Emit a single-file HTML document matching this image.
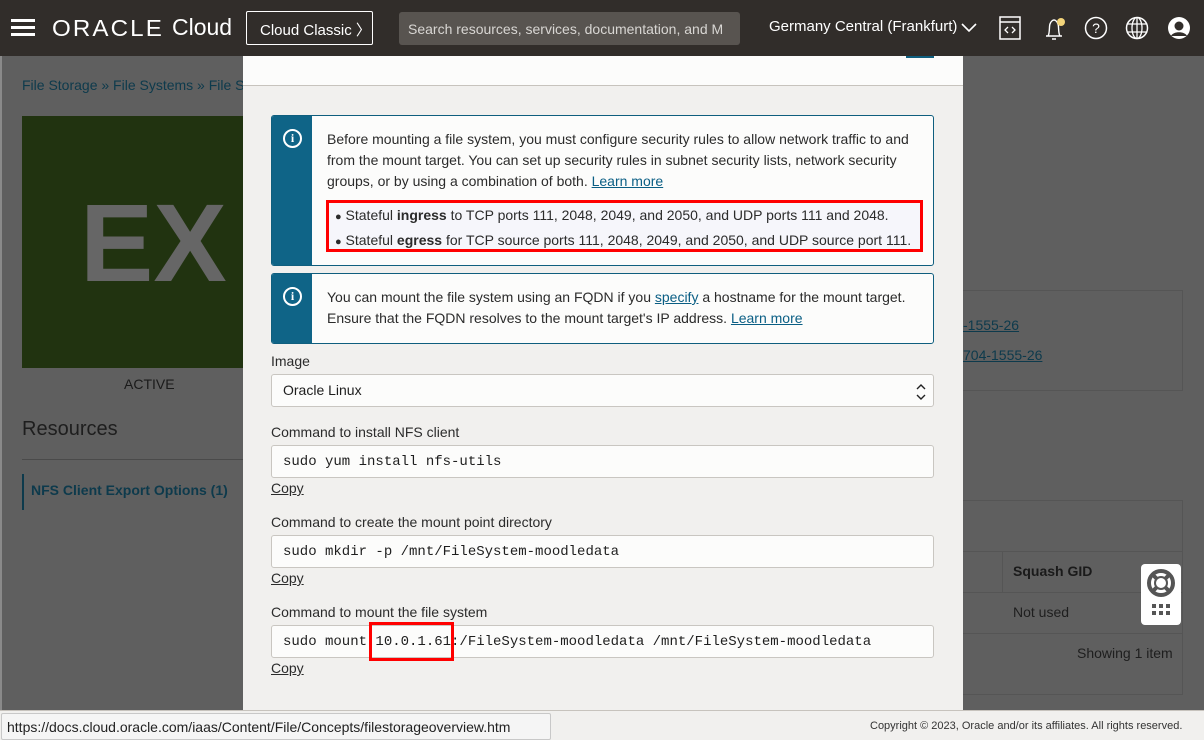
<!DOCTYPE html>
<html><head><meta charset="utf-8"><style>
*{box-sizing:border-box;margin:0;padding:0}
body{width:1204px;height:740px;overflow:hidden;position:relative;font-family:"Liberation Sans",sans-serif;background:#5f5f5f}
.hdr{position:absolute;left:0;top:0;width:1204px;height:56px;background:#312d2a;color:#fff}
.abs{position:absolute}
.ov{color:#0d3a4c}
a{color:#0a5e84;text-decoration:underline}
.modal{position:absolute;left:243px;top:56px;width:720px;height:654px;background:#f1f0ee;overflow:hidden}
.mtop{position:absolute;left:0;top:0;width:720px;height:30px;background:#fcfcfb;border-bottom:1px solid #c7c3bd;overflow:hidden}
.box{position:absolute;left:28px;width:663px;background:#fcfcfb;border:1px solid #0f5e7e;border-radius:3px;overflow:hidden}
.box .side{position:absolute;left:0;top:0;bottom:0;width:40px;background:#0f6487}
.box .ic{position:absolute;left:11px;top:13px;width:19px;height:19px;border:2px solid #fff;border-radius:50%;color:#fff;font:bold 12px "Liberation Serif",serif;text-align:center;line-height:15px}
.txt{position:absolute;left:55px;font-size:14px;line-height:21px;color:#2b2b2b}
.lbl{position:absolute;left:28px;font-size:14px;color:#2b2b2b}
.inp{position:absolute;left:28px;width:663px;height:33px;background:#fcfcfb;border:1px solid #c9c6c1;border-radius:3px;font:14px "Liberation Mono",monospace;color:#1e1e1e;padding:8px 0 0 11px}
.copy{position:absolute;left:28px;font-size:14px;color:#2b2b2b;text-decoration:underline}
</style></head><body>
<div class="abs" style="left:0;top:56px;width:2px;height:684px;background:#8a8a8a"></div>
<div class="hdr">
 <div class="abs" style="left:11px;top:19px;width:24px;height:3px;background:#fff;box-shadow:0 7px 0 #fff,0 14px 0 #fff"></div>
 <div class="abs" style="left:52px;top:15px;font-size:23px;letter-spacing:2px;transform:scaleX(1.05);transform-origin:left">ORACLE</div>
 <div class="abs" style="left:172px;top:14px;font-size:23px;">Cloud</div>
 <div class="abs" style="left:246px;top:11px;width:127px;height:34px;border:1px solid #fff;border-radius:2px;font-size:15px;padding:7px 0 0 13px;white-space:nowrap">Cloud Classic 〉</div>
 <div class="abs" style="left:399px;top:12px;width:341px;height:33px;background:#585450;border-radius:3px;font-size:14px;color:#d8d6d3;padding:9px 0 0 9px;white-space:nowrap;overflow:hidden">Search resources, services, documentation, and M</div>
 <div class="abs" style="left:769px;top:18px;font-size:15px;white-space:nowrap">Germany Central (Frankfurt)</div>
 <svg class="abs" style="left:960px;top:20px" width="18" height="14"><path d="M2 4l7 7 7-7" stroke="#fff" fill="none" stroke-width="1.6"/></svg>
 <svg class="abs" style="left:999px;top:16px" width="24" height="26"><rect x="1" y="1" width="20" height="22" fill="none" stroke="#fff" stroke-width="1.5"/><line x1="1" y1="6" x2="21" y2="6" stroke="#fff" stroke-width="1.5"/><path d="M9 11l-3 3 3 3M13 11l3 3-3 3" stroke="#fff" fill="none" stroke-width="1.3"/></svg>
 <svg class="abs" style="left:1040px;top:14px" width="28" height="28"><path d="M6 22h16M8 22c2-3 1-10 2-12 1-3 3-4 4-4s3 1 4 4c1 2 0 9 2 12M12 25h4" stroke="#fff" fill="none" stroke-width="1.4"/><circle cx="21" cy="8" r="4" fill="#f3d47a"/></svg>
 <svg class="abs" style="left:1084px;top:16px" width="26" height="26"><circle cx="12" cy="12" r="10.5" fill="none" stroke="#fff" stroke-width="1.5"/><text x="12" y="17" text-anchor="middle" fill="#fff" font-size="14" font-family="Liberation Sans">?</text></svg>
 <svg class="abs" style="left:1125px;top:16px" width="26" height="26"><circle cx="12" cy="12" r="10.5" fill="none" stroke="#fff" stroke-width="1.5"/><ellipse cx="12" cy="12" rx="5" ry="10.5" fill="none" stroke="#fff" stroke-width="1.3"/><path d="M2 8h20M2 16h20M12 1.5v21" stroke="#fff" stroke-width="1.3"/></svg>
 <svg class="abs" style="left:1167px;top:16px" width="26" height="26"><circle cx="12" cy="12" r="11" fill="#fff"/><circle cx="12" cy="10" r="4.5" fill="#312d2a"/><path d="M4 20c2-5 14-5 16 0" fill="#312d2a"/></svg>
</div>
<div class="abs ov" style="left:22px;top:77px;font-size:14px;white-space:nowrap">File Storage » File Systems » File S</div>
<div class="abs" style="left:22px;top:116px;width:221px;height:252px;background:#213310"></div>
<div class="abs" style="left:80px;top:180px;font-size:110px;font-weight:bold;color:#666">EX</div>
<div class="abs" style="left:124px;top:376px;font-size:14px;color:#1a1a1a">ACTIVE</div>
<div class="abs" style="left:22px;top:418px;font-size:20px;color:#1e1e1e">Resources</div>
<div class="abs" style="left:22px;top:459px;width:221px;height:1px;background:#4a4a4a"></div>
<div class="abs" style="left:22px;top:474px;width:2px;height:36px;background:#0d3a4c"></div>
<div class="abs ov" style="left:31px;top:482px;font-size:14px;font-weight:bold">NFS Client Export Options (1)</div>
<div class="abs" style="left:963px;top:290px;width:220px;height:1px;background:#555"></div>
<div class="abs" style="left:1182px;top:290px;width:1px;height:101px;background:#555"></div>
<div class="abs" style="left:963px;top:390px;width:220px;height:1px;background:#555"></div>
<div class="abs ov" style="left:963px;top:317px;font-size:14px;text-decoration:underline">-1555-26</div>
<div class="abs ov" style="left:963px;top:347px;font-size:14px;text-decoration:underline">704-1555-26</div>
<div class="abs" style="left:963px;top:500px;width:220px;height:195px;border:1px solid #555;border-left:none"></div>
<div class="abs" style="left:963px;top:551px;width:220px;height:1px;background:#555"></div>
<div class="abs" style="left:963px;top:592px;width:220px;height:1px;background:#555"></div>
<div class="abs" style="left:963px;top:633px;width:220px;height:1px;background:#555"></div>
<div class="abs" style="left:1002px;top:552px;width:1px;height:40px;background:#555"></div>
<div class="abs" style="left:1013px;top:563px;font-size:14px;font-weight:bold;color:#1a1a1a">Squash GID</div>
<div class="abs" style="left:1013px;top:604px;font-size:14px;color:#1e1e1e">Not used</div>
<div class="abs" style="left:1077px;top:645px;font-size:14px;color:#1e1e1e">Showing 1 item</div>
<div class="abs" style="left:1141px;top:564px;width:40px;height:61px;background:#fff;border-radius:4px"></div>
<svg class="abs" style="left:1145px;top:568px" width="32" height="52"><circle cx="16" cy="15" r="12" fill="none" stroke="#555" stroke-width="4"/><circle cx="16" cy="15" r="6" fill="none" stroke="#555" stroke-width="2"/><path d="M8 7l4 4M24 7l-4 4M8 23l4-4M24 23l-4-4" stroke="#555" stroke-width="4"/><g fill="#555"><rect x="7" y="36" width="4" height="4"/><rect x="14" y="36" width="4" height="4"/><rect x="21" y="36" width="4" height="4"/><rect x="7" y="43" width="4" height="4"/><rect x="14" y="43" width="4" height="4"/><rect x="21" y="43" width="4" height="4"/></g></svg>
<div class="modal">
 <div class="mtop"><div class="abs" style="left:27px;top:-27px;font-size:26px;color:#1e1e1e">Mount Commands</div><div class="abs" style="left:663px;top:0;width:28px;height:2px;background:#0f5e7e"></div></div>
 <div class="box" style="top:59px;height:151px"><div class="side"><div class="ic">i</div></div>
  <div class="txt" style="top:13px;width:600px">Before mounting a file system, you must configure security rules to allow network traffic to and from the mount target. You can set up security rules in subnet security lists, network security groups, or by using a combination of both. <a>Learn more</a></div>
  <div class="abs" style="left:54px;top:84px;width:597px;height:52px;border:3px solid #f00;background:#f6f6fb;font-size:14px;line-height:23px;padding:1px 0 0 6px;color:#2b2b2b;white-space:nowrap"><span style="font-size:11px">●</span> Stateful <b>ingress</b> to TCP ports 111, 2048, 2049, and 2050, and UDP ports 111 and 2048.<br><span style="font-size:11px">●</span> Stateful <b>egress</b> for TCP source ports 111, 2048, 2049, and 2050, and UDP source port 111.</div>
 </div>
 <div class="box" style="top:217px;height:71px"><div class="side"><div class="ic">i</div></div>
  <div class="txt" style="top:13px;width:600px">You can mount the file system using an FQDN if you <a>specify</a> a hostname for the mount target. Ensure that the FQDN resolves to the mount target's IP address. <a>Learn more</a></div>
 </div>
 <div class="lbl" style="top:297px">Image</div>
 <div class="inp" style="top:318px;font-family:'Liberation Sans',sans-serif;padding-top:7px">Oracle Linux<svg class="abs" style="right:6px;top:8px" width="12" height="18"><path d="M2 6l4-4 4 4M2 12l4 4 4-4" stroke="#222" fill="none" stroke-width="1.4"/></svg></div>
 <div class="lbl" style="top:368px">Command to install NFS client</div>
 <div class="inp" style="top:389px">sudo yum install nfs-utils</div>
 <div class="copy" style="top:424px">Copy</div>
 <div class="lbl" style="top:458px">Command to create the mount point directory</div>
 <div class="inp" style="top:479px">sudo mkdir -p /mnt/FileSystem-moodledata</div>
 <div class="copy" style="top:514px">Copy</div>
 <div class="lbl" style="top:548px">Command to mount the file system</div>
 <div class="inp" style="top:569px">sudo mount 10.0.1.61:/FileSystem-moodledata /mnt/FileSystem-moodledata</div>
 <div class="abs" style="left:126px;top:566px;width:85px;height:39px;border:3px solid #f00"></div>
 <div class="copy" style="top:604px">Copy</div>
</div>
<div class="abs" style="left:0;top:710px;width:1204px;height:30px;background:#f1f0ee;border-top:1px solid #c7c3bd"></div>
<div class="abs" style="left:1px;top:713px;width:550px;height:27px;background:#f5f5f5;border:1px solid #c8c8c8;border-radius:2px;font-size:14px;color:#222;padding:5px 0 0 5px;white-space:nowrap">https://docs.cloud.oracle.com/iaas/Content/File/Concepts/filestorageoverview.htm</div>
<div class="abs" style="left:870px;top:720px;font-size:11px;color:#333">Copyright © 2023, Oracle and/or its affiliates. All rights reserved.</div>
</body></html>
